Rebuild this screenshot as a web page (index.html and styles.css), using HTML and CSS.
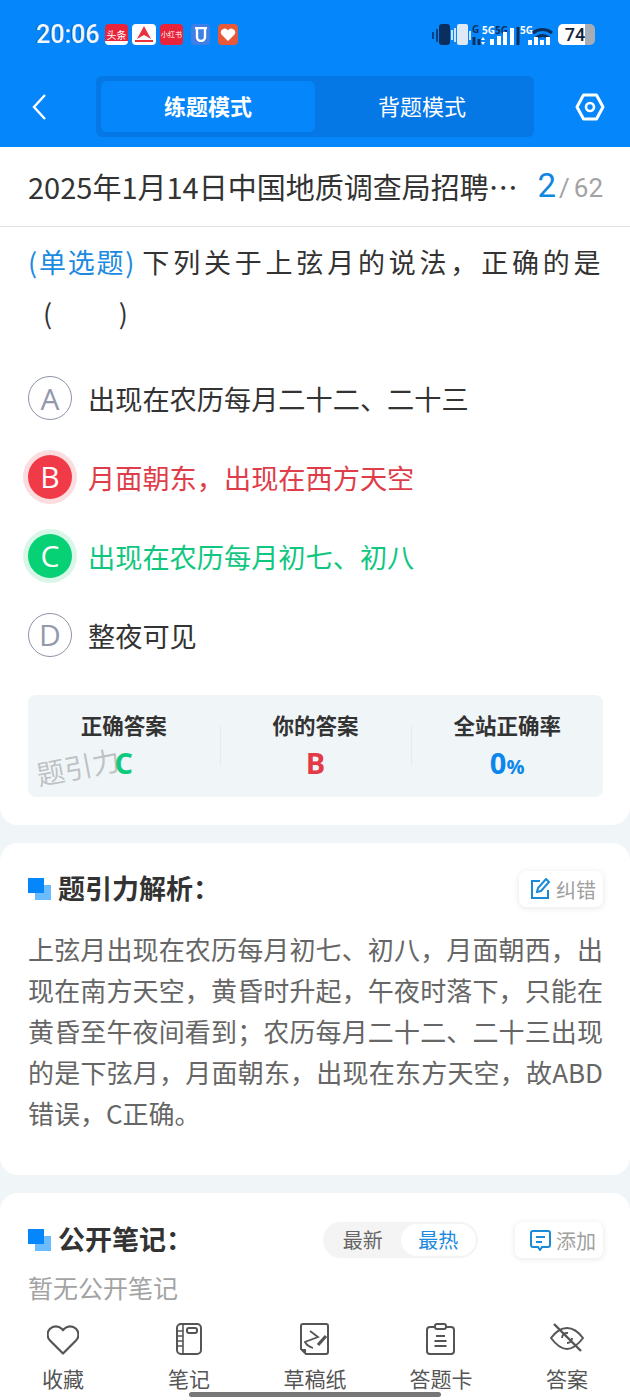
FILE: index.html
```html
<!DOCTYPE html>
<html>
<head>
    <meta charset="utf-8">
    <title>练题模式</title>
    <link rel="stylesheet" href="styles.css">
</head>
<body>
<div class="page">
    <div class="header">
        <div class="status-bar">
            <span class="clock">20:06</span>
            <div class="app-icons">
                <span class="app app-toutiao">头条</span>
                <span class="app app-white"><svg width="20" height="19" viewBox="0 0 20 19"><path d="M10 1 17 14 10 10 3 14z" fill="#e8323c"/><path d="M1 16h18" stroke="#e8323c" stroke-width="2"/></svg></span>
                <span class="app app-red">小红书</span>
                <span class="app app-blue">
                    <svg width="14" height="15" viewBox="0 0 14 15"><path d="M1 1h12M3 2v8a4 4 0 0 0 8 0V2" fill="none" stroke="#fff" stroke-width="2.400"/></svg>
                </span>
                <span class="app app-orange"><svg width="16" height="15" viewBox="0 0 16 15"><path d="M8 14 1.500 7.500a3.600 3.600 0 0 1 6.500-4 3.600 3.600 0 0 1 6.500 4z" fill="#fff"/></svg></span>
            </div>
            <div class="status-right">
                <svg class="status-icons" width="120" height="24" viewBox="0 0 120 24">
                    <path d="M1 8v7M5 5v13" stroke="#0a3f86" stroke-width="2"/>
                    <rect x="7" y="0" width="11" height="21" rx="3" fill="#0a2f5e"/>
                    <path d="M20 6v10M23 4v14" stroke="#cfe2f8" stroke-width="2"/>
                    <rect x="25" y="0" width="11" height="21" rx="2" fill="#dfe9f5"/>
                    <path d="M38 7v9" stroke="#cfe2f8" stroke-width="2"/>
                    <text x="40" y="9" class="sim-text sim-dark">G</text>
                    <path d="M42 21v-8M47 21v-6" stroke="#0a2f5e" stroke-width="3"/>
                    <text x="50" y="10" class="sim-text">5G</text>
                    <text x="63" y="10" class="sim-text sim-dark">5G</text>
                    <path d="M51 13l-2 3h4zM51 21l-2-3h4z" fill="#fff"/>
                    <path d="M60 21v-6M67 21v-9M73 21v-13M80 21v-17" stroke="#fff" stroke-width="4"/>
                    <path d="M86 21V3" stroke="#0a2f5e" stroke-width="3"/>
                    <text x="88" y="10" class="sim-text">5G</text>
                    <path d="M101 9a15 15 0 0 1 19 0M104 14a10 10 0 0 1 13 0" fill="none" stroke="#0a2f5e" stroke-width="3"/>
                    <path d="M98 21v-5M104 21v-8M110 21v-5M116 21v-8" stroke="#fff" stroke-width="4"/>
                </svg>
                <span class="battery"><span class="battery-num">74</span></span>
            </div>
        </div>
        <div class="nav-bar">
            <svg class="back-icon" width="16" height="28" viewBox="0 0 16 28"><path d="M14 2 3 14l11 12" fill="none" stroke="#fff" stroke-width="2.400"/></svg>
            <div class="mode-tabs">
                <div class="mode-tab mode-tab-active">练题模式</div>
                <div class="mode-tab">背题模式</div>
            </div>
            <svg class="setting-icon" width="30" height="28" viewBox="0 0 30 28"><path d="M8.500 2h13L28 14l-6.500 12h-13L2 14z" fill="none" stroke="#fff" stroke-width="3" stroke-linejoin="round"/><circle cx="15" cy="14" r="4" fill="none" stroke="#fff" stroke-width="2.600"/></svg>
        </div>
    </div>

    <div class="title-bar">
        <div class="paper-title">2025年1月14日中国地质调查局招聘…</div>
        <div class="progress"><span class="progress-now">2</span><span class="progress-sep">/</span><span class="progress-total">62</span></div>
    </div>

    <div class="card question-card">
        <div class="question">
            <div class="q-line"><span class="q-type">(单选题)</span> <span class="q-stem">下列关于上弦月的说法，正确的是</span></div>
            <div class="q-blank">(&nbsp;&nbsp;&nbsp;&nbsp;&nbsp;&nbsp;&nbsp;&nbsp;&nbsp;&nbsp;&nbsp;)</div>
        </div>

        <div class="option"><span class="opt-letter">A</span><span class="opt-text">出现在农历每月二十二、二十三</span></div>
        <div class="option option-wrong"><span class="opt-letter">B</span><span class="opt-text">月面朝东，出现在西方天空</span></div>
        <div class="option option-right"><span class="opt-letter">C</span><span class="opt-text">出现在农历每月初七、初八</span></div>
        <div class="option"><span class="opt-letter">D</span><span class="opt-text">整夜可见</span></div>

        <div class="answer-box">
            <div class="answer-col">
                <div class="answer-label">正确答案</div>
                <div class="answer-value green">C</div>
            </div>
            <div class="answer-col">
                <div class="answer-label">你的答案</div>
                <div class="answer-value red">B</div>
            </div>
            <div class="answer-col">
                <div class="answer-label">全站正确率</div>
                <div class="answer-value blue">0<small>%</small></div>
            </div>
            <span class="watermark">题引力</span>
        </div>
    </div>

    <div class="card analysis-card">
        <div class="section-head">
            <span class="square-mark"></span>
            <h3>题引力解析：</h3>
            <div class="small-btn">
                <svg width="22" height="22" viewBox="0 0 22 22"><path d="M11 3H3v17h16v-8M9 10l-1 4 4-1 8-9-3-3z" fill="none" stroke="#1a8ad8" stroke-width="2"/></svg>
                <span>纠错</span>
            </div>
        </div>
        <p class="analysis-text">上弦月出现在农历每月初七、初八，月面朝西，出现在南方天空，黄昏时升起，午夜时落下，只能在黄昏至午夜间看到；农历每月二十二、二十三出现的是下弦月，月面朝东，出现在东方天空，故ABD错误，C正确。</p>
    </div>

    <div class="card notes-card">
        <div class="section-head">
            <span class="square-mark"></span>
            <h3>公开笔记：</h3>
            <div class="sort-switch"><span class="sort-item">最新</span><span class="sort-item sort-active">最热</span></div>
            <div class="small-btn">
                <svg width="22" height="22" viewBox="0 0 22 22"><path d="M4 2h15a2 2 0 0 1 2 2v12a2 2 0 0 1-2 2h-6l-2 3-2-3H4a2 2 0 0 1-2-2V4a2 2 0 0 1 2-2z M7 8h9M7 13h6" fill="none" stroke="#1a8ad8" stroke-width="2"/></svg>
                <span>添加</span>
            </div>
        </div>
        <div class="no-notes">暂无公开笔记</div>
    </div>

    <div class="bottom-bar">
        <div class="tool">
            <svg width="32" height="32" viewBox="0 0 32 32"><path d="M16 30.500 3 17.500a8.300 8.300 0 0 1 0-11.700 8.300 8.300 0 0 1 11.700 0l1.300 1.300 1.300-1.300a8.300 8.300 0 0 1 11.700 0 8.300 8.300 0 0 1 0 11.700z" fill="none" stroke="#555" stroke-width="2.200" stroke-linejoin="round"/></svg>
            <span>收藏</span>
        </div>
        <div class="tool">
            <svg width="32" height="32" viewBox="0 0 32 32"><rect x="4" y="1" width="24" height="30" rx="4" fill="none" stroke="#555" stroke-width="2"/><path d="M10 1v30M4 8h6M4 13h6M4 18h6M4 23h6" stroke="#555" stroke-width="1.600"/><rect x="14" y="5" width="10" height="5" rx="2" fill="none" stroke="#555" stroke-width="2"/></svg>
            <span>笔记</span>
        </div>
        <div class="tool">
            <svg width="32" height="32" viewBox="0 0 32 32"><path d="M7 31H27a2 2 0 0 0 2-2V3a2 2 0 0 0-2-2H4a2 2 0 0 0-2 2v23z" fill="none" stroke="#555" stroke-width="2"/><path d="M2 26h5v5z" fill="#555"/><path d="M11 8l8 6-13 5q2 4 8 6" fill="none" stroke="#555" stroke-width="1.800"/><path d="M27 13 19 22" stroke="#555" stroke-width="3.200"/></svg>
            <span>草稿纸</span>
        </div>
        <div class="tool">
            <svg width="32" height="32" viewBox="0 0 32 32"><path d="M10 4H5a3 3 0 0 0-3 3v21a3 3 0 0 0 3 3h21a3 3 0 0 0 3-3V7a3 3 0 0 0-3-3h-5" fill="none" stroke="#555" stroke-width="2"/><rect x="10" y="1" width="11" height="5" rx="2" fill="none" stroke="#555" stroke-width="2"/><path d="M11 13h9M9.500 18h12M9.500 23h12" stroke="#555" stroke-width="2"/></svg>
            <span>答题卡</span>
        </div>
        <div class="tool">
            <svg width="34" height="32" viewBox="0 0 34 32"><path d="M1 15C7 7 12 5 17 5s10 2 16 10c-6 8-11 11-16 11S7 23 1 15z" fill="none" stroke="#555" stroke-width="2"/><path d="M12 15a5 5 0 0 1 6-5M22 15a5 5 0 0 1-5 5" fill="none" stroke="#555" stroke-width="2"/><path d="M4 1l27 27" stroke="#555" stroke-width="2.400"/></svg>
            <span>答案</span>
        </div>
        <span class="home-bar"></span>
    </div>
</div>
</body>
</html>
```

FILE: styles.css
```css
* {
    box-sizing: border-box;
}

body {
    margin: 0;
    font-family: "Noto Sans CJK SC", "Noto Sans", sans-serif;
    background-color: #f0f5f8;
    color: #333;
}

.page {
    position: relative;
    width: 630px;
    height: 1400px;
    overflow: hidden;
}

.header {
    height: 147px;
    background-color: #0686fb;
    color: #fff;
}

.status-bar {
    height: 76px;
    padding: 24px 35px 0 36px;
    display: flex;
    align-items: flex-start;
}

.clock {
    font-family: "Roboto", sans-serif;
    font-size: 25px;
    font-weight: 500;
    line-height: 21px;
    width: 69px;
    color: #f0f7ff;
    text-shadow: -1px 0 rgba(10, 50, 110, 0.55);
}

.app-icons {
    display: flex;
    align-items: center;
    height: 21px;
}

.app {
    display: flex;
    align-items: center;
    justify-content: center;
    width: 23px;
    height: 21px;
    margin-right: 4px;
    border-radius: 4px;
    color: #fff;
    font-size: 10px;
    line-height: 1;
    white-space: nowrap;
    overflow: hidden;
}

.app-toutiao {
    background: linear-gradient(#e8233a 82%, #fff 82%);
}

.app-white {
    background-color: #fff;
    width: 24px;
}

.app-red {
    background-color: #e8233a;
    font-size: 7px;
}

.app-blue {
    width: 19px;
    margin-left: 4px;
    margin-right: 8px;
    background-color: #3f7fe6;
}

.app-orange {
    width: 20px;
    margin-right: 0;
    background-color: #e8593a;
}

.status-right {
    margin-left: auto;
    display: flex;
    align-items: flex-start;
    height: 24px;
}

.status-icons {
    overflow: visible;
}

.sim-text {
    font-family: "Noto Sans", sans-serif;
    font-size: 10px;
    font-weight: 700;
    fill: #fff;
}

.sim-dark {
    fill: #0a2f5e;
}

.battery {
    width: 37px;
    height: 21px;
    margin-left: 6px;
    border-radius: 5px;
    background: linear-gradient(90deg, #fff 0, #fff 73%, #a6adb7 73%);
}

.battery-num {
    display: block;
    text-align: center;
    font-family: "Roboto", sans-serif;
    font-weight: 500;
    font-size: 18px;
    line-height: 21px;
    color: #12233d;
    padding-right: 3px;
}

.nav-bar {
    height: 61px;
    padding: 0 25px 0 31px;
    display: flex;
    align-items: center;
}

.back-icon {
    margin-right: 49px;
}

.mode-tabs {
    display: flex;
    width: 438px;
    height: 61px;
    padding: 5px;
    border-radius: 6px;
    background-color: #0678e6;
}

.mode-tab {
    flex: 1;
    display: flex;
    align-items: center;
    justify-content: center;
    padding-bottom: 3px;
    border-radius: 6px;
    font-size: 22px;
}

.mode-tab-active {
    background-color: #0686fb;
    font-weight: 700;
}

.setting-icon {
    margin-left: auto;
}

.title-bar {
    height: 80px;
    padding: 0 27px 2px 28px;
    display: flex;
    align-items: center;
    justify-content: space-between;
    background-color: #fff;
    border-bottom: 1px solid #e2e2e2;
}

.paper-title {
    font-size: 29px;
    color: #333;
    white-space: nowrap;
}

.progress {
    display: flex;
    align-items: baseline;
    font-family: "Roboto", sans-serif;
    color: #a3a3a3;
    font-size: 26px;
}

.progress-now {
    font-size: 33px;
    color: #0f86e0;
}

.progress-sep {
    margin: 0 4px 0 3px;
}

.card {
    background-color: #fff;
}

.question-card {
    height: 598px;
    padding: 9px 27px 0 28px;
    border-radius: 0 0 18px 18px;
}

.question {
    font-size: 27px;
    line-height: 51px;
    height: 140px;
    color: #333;
}

.q-line {
    white-space: nowrap;
}

.q-type {
    color: #1b8ae0;
    letter-spacing: 1.800px;
}

.q-stem {
    letter-spacing: 3.800px;
}

.q-blank {
    padding-left: 15px;
}

.option {
    display: flex;
    align-items: center;
    height: 44px;
    margin-bottom: 34.900px;
}

.opt-letter {
    flex: none;
    width: 44px;
    height: 44px;
    margin-right: 16px;
    display: flex;
    align-items: center;
    justify-content: center;
    border: 1px solid #8d93a8;
    border-radius: 50%;
    color: #9498ac;
    font-family: "Open Sans", sans-serif;
    font-size: 30px;
}

.opt-text {
    font-size: 27.200px;
    color: #333;
}

.option-wrong .opt-letter {
    border: none;
    background-color: #f13a48;
    color: #fff;
    box-shadow: 0 0 0 5px #fbdcdf;
}

.option-wrong .opt-text {
    color: #df3d49;
}

.option-right .opt-letter {
    border: none;
    background-color: #07d175;
    color: #fff;
    box-shadow: 0 0 0 5px #d9f7e9;
}

.option-right .opt-text {
    color: #11c77f;
}

.answer-box {
    position: relative;
    display: flex;
    height: 102px;
    margin-top: 38px;
    padding-top: 10px;
    border-radius: 8px;
    background-color: #f0f5f8;
}

.answer-col {
    flex: 1;
    text-align: center;
}

.answer-col + .answer-col {
    background: linear-gradient(#e6ebee, #e6ebee) left 20px / 1px 40px no-repeat;
}

.answer-label {
    font-size: 21.500px;
    font-weight: 700;
    line-height: 39px;
    color: #333;
}

.answer-value {
    font-family: "Open Sans", sans-serif;
    font-size: 29px;
    font-weight: 700;
    line-height: 38px;
}

.answer-value small {
    font-size: 20px;
}

.green {
    color: #0ecb7c;
}

.red {
    color: #e23a47;
}

.blue {
    color: #0a86ec;
}

.watermark {
    position: absolute;
    left: 8px;
    top: 53px;
    font-size: 28px;
    line-height: 36px;
    color: rgba(130, 130, 130, 0.45);
    transform: rotate(-11deg);
}

.analysis-card {
    height: 332px;
    margin-top: 18px;
    padding: 27px 27px 0 28px;
    border-radius: 18px;
}

.section-head {
    display: flex;
    align-items: center;
    height: 38px;
}

.section-head h3 {
    margin: -4px 0 0;
    font-size: 27px;
    font-weight: 700;
    color: #333;
}

.square-mark {
    flex: none;
    width: 23px;
    height: 22px;
    margin-right: 7px;
    background:
        linear-gradient(#0686fb, #0686fb) 0 0 / 16px 15px no-repeat,
        linear-gradient(#6abcff, #6abcff) 100% 100% / 16px 15px no-repeat;
}

.small-btn {
    display: flex;
    align-items: center;
    gap: 5px;
    margin-left: auto;
    height: 36px;
    padding: 0 7px 0 10px;
    border-radius: 7px;
    background-color: #fff;
    box-shadow: 0 1px 6px rgba(0, 0, 0, 0.1);
    color: #a0a0a0;
    font-size: 20px;
}

.analysis-text {
    margin: 20px 0 0;
    font-size: 26px;
    line-height: 41px;
    color: #666;
    text-align: justify;
}

.notes-card {
    height: 300px;
    margin-top: 18px;
    padding: 28px 27px 0 28px;
    border-radius: 18px;
}

.sort-switch {
    display: flex;
    align-items: center;
    height: 36px;
    margin-left: auto;
    padding: 2px;
    border-radius: 18px;
    background-color: #f4f4f4;
}

.sort-item {
    width: 75.500px;
    text-align: center;
    font-size: 20px;
    color: #666;
    line-height: 32px;
}

.sort-active {
    border-radius: 16px;
    background-color: #fff;
    color: #1b8ae0;
}

.notes-card .small-btn {
    margin-left: 37px;
    padding-left: 14px;
}

.no-notes {
    margin-top: 10px;
    font-size: 25px;
    line-height: 36px;
    color: #a3a3a3;
}

.bottom-bar {
    position: absolute;
    left: 0;
    right: 0;
    bottom: 0;
    height: 90px;
    display: flex;
    justify-content: space-between;
    padding: 13px 18px 0 18px;
    background-color: #fff;
}

.tool {
    display: flex;
    flex-direction: column;
    align-items: center;
    width: 90px;
    color: #555;
    font-size: 21px;
    line-height: 30px;
}

.tool svg {
    margin-bottom: 8px;
}

.home-bar {
    position: absolute;
    left: 189px;
    bottom: 3px;
    width: 252px;
    height: 5px;
    border-radius: 3px;
    background-color: #777;
}
```
